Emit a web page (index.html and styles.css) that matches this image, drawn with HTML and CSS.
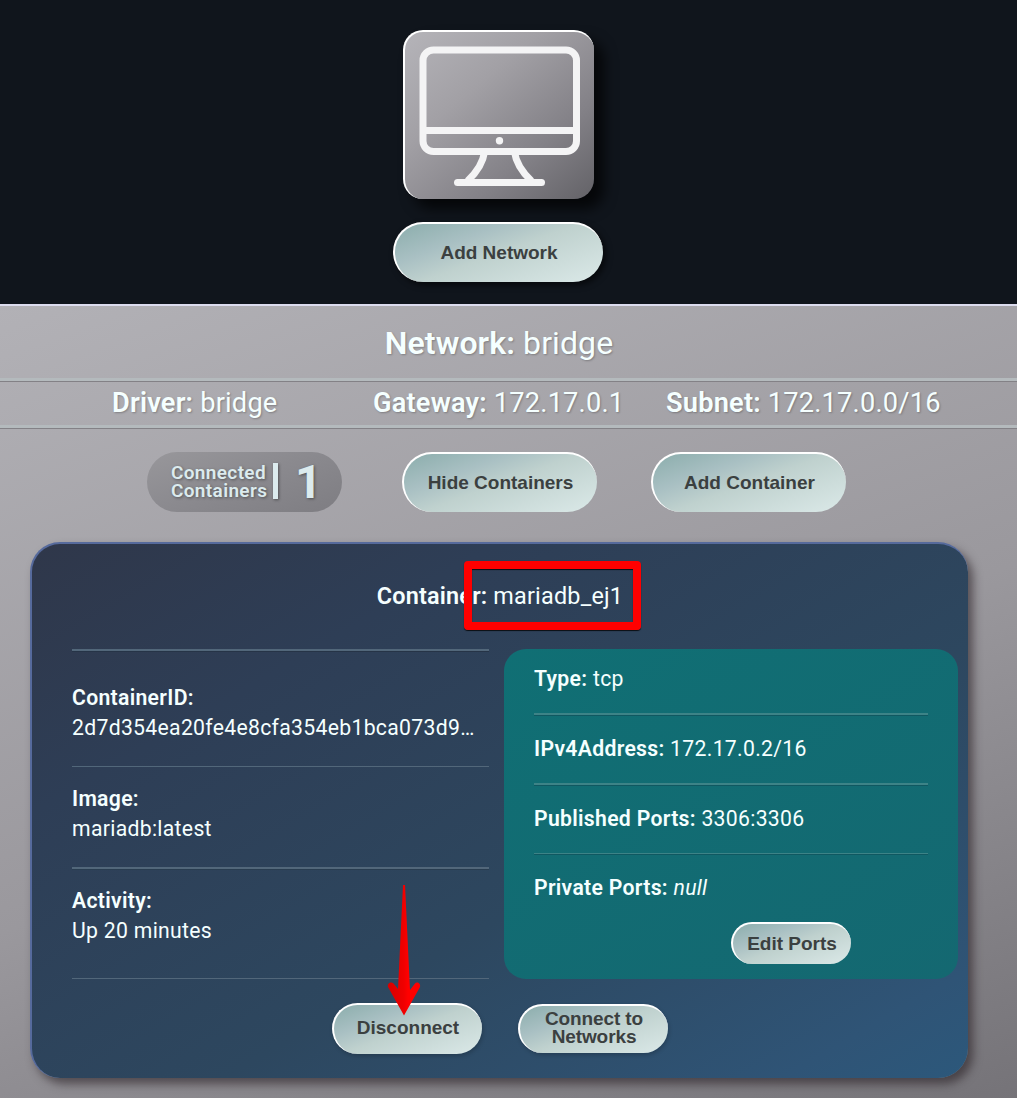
FILE: index.html
```html
<!DOCTYPE html>
<html lang="en">
<head>
<meta charset="utf-8">
<title>Docker Networks</title>
<link rel="stylesheet" href="styles.css">
</head>
<body>
<header class="top">
  <div class="tile">
    <svg class="monitor" width="162" height="142" viewBox="0 0 162 142" fill="none" stroke="#f4f4f5" stroke-width="7">
      <rect x="4" y="4" width="153.500" height="101.500" rx="10.500"/>
      <path d="M4 84.500H157M65.500 106C64 117 57 127 48.500 135M95.500 106C97 117 104 127 112.500 135"/>
      <path d="M38.500 136.500H122.500" stroke-linecap="round"/>
      <circle cx="80.500" cy="94.700" r="3.700" fill="#f4f4f5" stroke="none"/>
    </svg>
  </div>
  <button class="btn add-network">Add Network</button>
</header>
<main class="network">
  <h1 class="network-title"><b>Network:</b> bridge</h1>
  <hr class="rule">
  <div class="info">
    <span><b>Driver:</b> bridge</span>
    <span><b>Gateway:</b> 172.17.0.1</span>
    <span><b>Subnet:</b> 172.17.0.0/16</span>
  </div>
  <hr class="rule">
  <div class="actions">
    <div class="counter"><span class="counter-label">Connected<br>Containers</span><span class="counter-bar"></span><span class="counter-value">1</span></div>
    <button class="btn">Hide Containers</button>
    <button class="btn">Add Container</button>
  </div>
  <section class="card">
    <h2 class="card-title"><b>Container:</b> mariadb_ej1</h2>
    <div class="columns">
      <div class="details">
        <div class="detail first"><b>ContainerID:</b><span class="value">2d7d354ea20fe4e8cfa354eb1bca073d9…</span></div>
        <div class="detail"><b>Image:</b><span class="value">mariadb:latest</span></div>
        <div class="detail last"><b>Activity:</b><span class="value">Up 20 minutes</span></div>
      </div>
      <div class="ports">
        <div class="port"><b>Type:</b> tcp</div>
        <div class="port"><b>IPv4Address:</b> 172.17.0.2/16</div>
        <div class="port thin"><b>Published Ports:</b> 3306:3306</div>
        <div class="port none"><b>Private Ports:</b> <i>null</i></div>
        <button class="btn edit">Edit Ports</button>
      </div>
    </div>
    <div class="card-actions">
      <button class="btn disconnect">Disconnect</button>
      <button class="btn connect">Connect to Networks</button>
    </div>
    <div class="highlight"></div>
    <svg class="arrow" width="36" height="134" viewBox="0 0 36 134">
      <defs><linearGradient id="red"><stop offset="0" stop-color="#d80000"/><stop offset=".5" stop-color="#f00000"/><stop offset=".62" stop-color="#ff0000"/></linearGradient></defs>
      <path d="M17 1h2L24 106 29 99.500C31 97 35 99.500 34 103L18 131.500 2 103C1 99.500 5 97 7.500 99.500L12 105Z" fill="url(#red)"/>
    </svg>
  </section>
</main>
</body>
</html>
```
FILE: styles.css
```css
* { box-sizing: border-box; }
html, body { height: 100%; }
body {
  margin: 0;
  display: flex;
  flex-direction: column;
  background: #10151c;
  color: #f5ffff;
  font-family: Roboto, "Liberation Sans", sans-serif;
  letter-spacing: 0.2px;
}
b { font-weight: 600; }
h1, h2 { margin: 0; font-weight: 400; }

.top {
  flex: none;
  height: 304px;
  padding: 30px 21px 0 0;
  display: flex;
  flex-direction: column;
  align-items: center;
}
.tile {
  width: 191px;
  height: 169px;
  padding: 14px 0 0 14px;
  border-radius: 20px;
  border-top: 2px solid #fff;
  border-left: 2px solid #fff;
  background: linear-gradient(140deg, #b5b4b9, #a2a0a5 35%, #838187 70%, #636267);
  box-shadow: 10px 10px 13px rgba(0, 0, 0, 0.7);
}
.monitor { display: block; }

.btn {
  width: 195px;
  height: 60px;
  padding: 0;
  border: 0 solid #fff;
  border-width: 2px 0 0 2px;
  border-radius: 30px;
  background: linear-gradient(160deg, #8badac, #a9c0c3 30%, #bfd1ce 50%, #dbe9e8);
  color: #3b4040;
  font: bold 19px/18px "Liberation Sans", Arial, sans-serif;
  letter-spacing: 0;
  box-shadow: 1px 2px 4px rgba(0, 0, 0, 0.2);
}
.add-network { width: 210px; margin-top: 23px; box-shadow: 3px 3px 6px rgba(0, 0, 0, 0.6); }

.network {
  flex: none;
  height: 794px;
  border-top: 2px solid #dcdcee;
  background: linear-gradient(160deg, #b2b1b6, #9a989d 54%, #757378);
}
.network-title {
  height: 72px;
  padding-right: 19px;
  text-align: center;
  font-size: 32px;
  line-height: 74px;
  letter-spacing: 0.1px;
  text-shadow: 1px 1px 2px rgba(0, 0, 0, 0.25);
}
.rule {
  height: 3px;
  margin: 0;
  border: 0;
  background: #b4babd;
  box-shadow: 0 1px 0 #838186;
}
.info {
  height: 44px;
  padding-left: 112px;
  display: grid;
  grid-template-columns: 261px 293px 1fr;
  font-size: 27.2px;
  line-height: 45px;
  white-space: nowrap;
  text-shadow: 1px 1px 2px rgba(0, 0, 0, 0.25);
}
.actions {
  height: 114px;
  padding: 24px 0 0 147px;
  display: flex;
  align-items: flex-start;
}
.actions .btn { margin-left: 60px; box-shadow: none; }
.actions .btn + .btn { margin-left: 54px; }
.counter {
  width: 195px;
  height: 60px;
  padding-left: 24px;
  display: flex;
  align-items: center;
  border-radius: 30px;
  background: linear-gradient(160deg, #98979b, #8a898e 50%, #7e7d82);
  color: #dcebee;
  text-shadow: 1px 1px 3px rgba(0, 0, 0, 0.4);
}
.counter-label { width: 102px; font-size: 19px; line-height: 18px; font-weight: 600; letter-spacing: 0.35px; white-space: nowrap; }
.counter-bar { width: 5px; height: 36px; margin-top: -2px; background: #dcebee; box-shadow: 1px 1px 3px rgba(0, 0, 0, 0.4); }
.counter-value { margin-left: 17px; font-size: 47px; line-height: 60px; font-weight: 700; }

.card {
  position: relative;
  width: 938px;
  height: 536px;
  margin-left: 30px;
  border: 0 solid #566a9c;
  border-width: 2px 0 0 2px;
  border-radius: 30px;
  background: linear-gradient(150deg, #2f374a, #2e3e56 25%, #2d475f 60%, #2f5476 90%, #2c587b);
  box-shadow: 5px 6px 10px rgba(40, 32, 36, 0.6);
}
.card-title {
  height: 105px;
  text-align: center;
  font-size: 23.4px;
  line-height: 104px;
}
.columns { display: flex; align-items: flex-start; height: 330px; }
.details { width: 417px; margin: 0 15px 0 40px; font-size: 21.2px; line-height: 30px; letter-spacing: 0.3px; }
.detail { height: 101px; padding-top: 17px; border-bottom: 1px solid #52677a; white-space: nowrap; }
.detail b, .value { display: block; }
.detail.first { height: 118px; padding-top: 32px; border-top: 2px solid #52677a; box-shadow: inset 0 1px 0 #263447; }
.detail:nth-child(2) { height: 102px; border-bottom-width: 2px; box-shadow: 0 1px 0 #293d50; }
.detail.last { height: 110px; }
.ports {
  width: 454px;
  height: 330px;
  padding: 0 30px;
  border-radius: 22px;
  background: linear-gradient(150deg, #106f74, #146871);
  font-size: 21.2px;
  letter-spacing: 0.3px;
}
.port { height: 70px; line-height: 30px; padding-top: 19px; border-bottom: 2px solid #3d8387; box-shadow: 0 1px 0 #105861; }
.port:first-child { height: 66px; padding-top: 15px; }
.port.thin { height: 69px; border-bottom-width: 1px; }
.port.none { border: 0; box-shadow: none; height: 68px; }
.edit { display: block; width: 120px; height: 42px; margin-left: 197px; border-radius: 21px; box-shadow: none; }
.card-actions { display: flex; align-items: flex-start; padding: 24px 0 0 300px; }
.disconnect { width: 150px; height: 51px; padding-bottom: 4px; border-radius: 26px; }
.connect { width: 150px; height: 49px; padding: 0 21px 4px; margin: 1px 0 0 36px; border-radius: 25px; letter-spacing: -0.1px; }

.highlight {
  position: absolute;
  left: 432px;
  top: 17px;
  width: 177px;
  height: 69px;
  border: 8px solid #f00;
  border-radius: 4px;
  box-shadow: 0 1px 1px rgba(0, 0, 0, 0.8), inset 0 1px 1px rgba(0, 0, 0, 0.8);
}
.arrow { position: absolute; left: 354px; top: 340px; }
```
